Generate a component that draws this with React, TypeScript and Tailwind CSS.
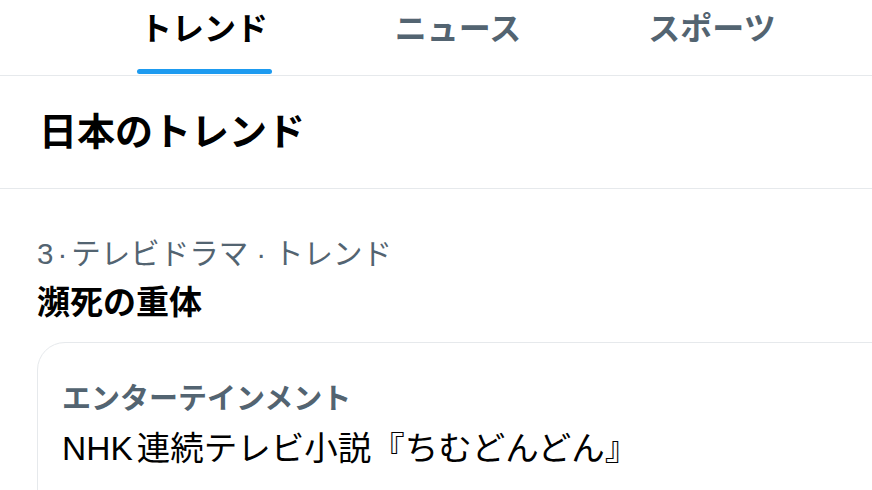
import React from "react";

const tabs = [
  { label: "トレンド", active: true },
  { label: "ニュース", active: false },
  { label: "スポーツ", active: false },
];

export default function App() {
  return (
    <div className="w-[872px] h-[490px] overflow-hidden bg-white text-black font-['Liberation_Sans','Noto_Sans_CJK_JP',sans-serif]">
      {/* tabs */}
      <div className="flex h-[76px] pl-[77px] border-b border-[#e6e9ec]">
        {tabs.map((tab, idx) => (
          <div key={idx} className="w-[254px] shrink-0 flex flex-col items-center justify-between pt-[9px]">
            <span
              className={
                tab.active
                  ? "text-[32px] leading-[40px] font-bold text-black"
                  : "text-[32px] leading-[40px] font-bold text-[#536471]"
              }
            >
              {tab.label}
            </span>
            {tab.active ? (
              <div className="w-[135px] h-[5px] rounded-full bg-[#1d9bf0] mb-[1px]" />
            ) : (
              <div className="h-[5px]" />
            )}
          </div>
        ))}
      </div>

      {/* heading */}
      <div className="h-[113px] flex items-center px-[39px] border-b border-[#e6e9ec]">
        <div className="text-[38px] leading-[48px] font-bold text-black">日本のトレンド</div>
      </div>

      {/* trend item */}
      <div className="pt-[47px] px-[37px]">
        <div className="text-[29.5px] leading-[36px] text-[#536471]">
          3<span className="mx-[4px]">·</span>テレビドラマ<span className="mx-[8px]">·</span>トレンド
        </div>
        <div className="mt-[11px] text-[33px] leading-[40px] font-bold text-black">瀕死の重体</div>

        <div className="mt-[19px] w-[900px] h-[200px] border border-[#e6e9ec] rounded-[28px] pl-[24px] pt-[38px]">
          <div className="text-[29px] leading-[36px] font-semibold text-[#536471]">エンターテインメント</div>
          <div className="mt-[12px] text-[33.5px] leading-[40px] text-black">
            <span className="mr-[4px]">NHK</span>連続テレビ小説『ちむどんどん』
          </div>
        </div>
      </div>
    </div>
  );
}
